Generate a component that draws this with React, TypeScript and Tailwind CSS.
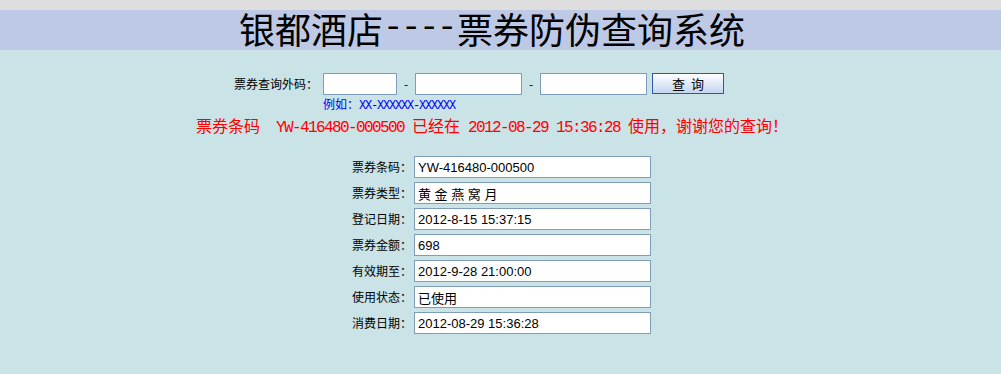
const cjk = "font-['SimSun','Noto_Sans_CJK_SC',sans-serif]";
const mono = "font-['Liberation_Mono','Noto_Sans_CJK_SC',monospace]";

const fields = [
  { label: "票券条码：", value: "YW-416480-000500" },
  { label: "票券类型：", value: "黄 金 燕 窝 月" },
  { label: "登记日期：", value: "2012-8-15 15:37:15" },
  { label: "票券金额：", value: "698" },
  { label: "有效期至：", value: "2012-9-28 21:00:00" },
  { label: "使用状态：", value: "已使用" },
  { label: "消费日期：", value: "2012-08-29 15:36:28" },
];

function Box({ width, value }: { width: string; value?: string }) {
  return (
    <input
      readOnly
      defaultValue={value}
      className={`${width} h-[22px] border border-[#7f9db9] bg-white px-[3px] text-[13px] text-black outline-none font-['Liberation_Sans','Noto_Sans_CJK_SC',sans-serif]`}
    />
  );
}

export default function App() {
  return (
    <div className="w-[1001px] h-[374px] overflow-hidden bg-[#c9e3e6]">
      <div className="h-[10px] bg-[#dedede]" />
      <div className="h-[40px] bg-[#bec9e5]">
        <div className={`w-[984px] h-full pb-[4px] flex items-center justify-center text-[36px] leading-none text-black ${cjk}`}>
          银都酒店<span className={`${mono} text-[34px] tracking-[-2.4px] mr-[2px]`}>----</span>票券防伪查询系统
        </div>
      </div>

      <div className={`${cjk} text-[12px] text-black`}>
        {/* query row */}
        <div className="flex items-center pl-[234px] pt-[23px] h-[44px]">
          <span className="w-[89px]">票券查询外码：</span>
          <Box width="w-[74px]" />
          <span className="w-[18px] text-center">-</span>
          <Box width="w-[107px]" />
          <span className="w-[18px] text-center">-</span>
          <Box width="w-[107px]" />
          <button className="ml-[5px] w-[72px] h-[21px] border border-[#3158a8] bg-gradient-to-b from-white to-[#c5d5ee] text-[13px] tracking-[6px] pl-[6px]">
            查询
          </button>
        </div>

        <div className="pl-[323px] mt-[4px] h-[12px] leading-[12px] text-[#0000ff]">
          例如：<span className={`${mono} tracking-[-1.2px]`}>XX-XXXXXX-XXXXXX</span>
        </div>

        <div className="w-[984px] mt-[7px] h-[16px] leading-[16px] text-center text-[16px] text-[#ff0000] whitespace-pre">
          票券条码<span className={`${mono} tracking-[-1.6px]`}>{"  YW-416480-000500 "}</span>已经在<span className={`${mono} tracking-[-1.6px]`}>{" 2012-08-29 15:36:28 "}</span>使用，谢谢您的查询！
        </div>

        {/* detail fields */}
        <div className="mt-[23px] flex flex-col gap-[4px]">
          {fields.map((f) => (
            <div key={f.label} className="flex items-center h-[22px]">
              <span className="w-[412px] text-right">{f.label}</span>
              <span className="w-[2px]" />
              <Box width="w-[237px]" value={f.value} />
            </div>
          ))}
        </div>
      </div>
    </div>
  );
}
